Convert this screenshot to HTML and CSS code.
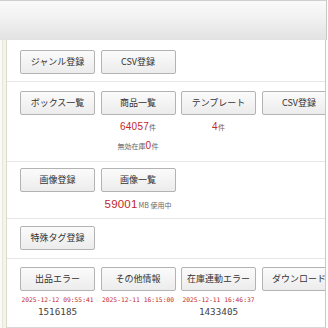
FILE: index.html
```html
<!DOCTYPE html>
<html lang="ja">
<head>
<meta charset="utf-8">
<link rel="stylesheet" href="styles.css">
</head>
<body>
<div class="page">
  <div class="topbar"></div>
  <div class="main">
    <div class="gutter"></div>
    <div class="frame">
      <section class="sec s1">
        <div class="col"><button class="btn">ジャンル登録</button></div>
        <div class="col"><button class="btn">CSV登録</button></div>
      </section>
      <section class="sec s2">
        <div class="col"><button class="btn">ボックス一覧</button></div>
        <div class="col">
          <button class="btn">商品一覧</button>
          <div class="stat first"><span class="num">64057</span>件</div>
          <div class="stat second">無効在庫<span class="num small">0</span>件</div>
        </div>
        <div class="col">
          <button class="btn">テンプレート</button>
          <div class="stat first"><span class="num">4</span>件</div>
        </div>
        <div class="col"><button class="btn">CSV登録</button></div>
      </section>
      <section class="sec s3">
        <div class="col"><button class="btn">画像登録</button></div>
        <div class="col">
          <button class="btn">画像一覧</button>
          <div class="stat first"><span class="num big">59001</span>MB 使用中</div>
        </div>
      </section>
      <section class="sec s4">
        <div class="col"><button class="btn">特殊タグ登録</button></div>
      </section>
      <section class="sec s5">
        <div class="col">
          <button class="btn">出品エラー</button>
          <div class="date">2025-12-12 09:55:41</div>
          <div class="count">1516185</div>
        </div>
        <div class="col">
          <button class="btn">その他情報</button>
          <div class="date">2025-12-11 16:15:00</div>
        </div>
        <div class="col">
          <button class="btn">在庫連動エラー</button>
          <div class="date">2025-12-11 16:46:37</div>
          <div class="count">1433405</div>
        </div>
        <div class="col"><button class="btn">ダウンロード</button></div>
      </section>
    </div>
  </div>
</div>
</body>
</html>
```

FILE: styles.css
```css
html, body {
  margin: 0;
  padding: 0;
  background: #ffffff;
  font-family: "Noto Sans CJK JP", "Noto Sans", sans-serif;
}

.page {
  width: 328px;
  height: 328px;
  overflow: hidden;
}

.topbar {
  box-sizing: border-box;
  width: 327px;
  height: 40px;
  border-top: 1px solid #cfcfcf;
  border-right: 1px solid #c8c8c8;
  background: linear-gradient(#fafafa, #f1f1f1 45%, #e2e2e2);
}

.main {
  display: flex;
  height: 288px;
}

.gutter {
  width: 6px;
  flex: none;
  background: #f4f4ec;
  border-right: 1px solid #dcdcca;
  box-shadow: inset 2px 0 0 #fbfbf6, inset 3px 0 0 #e6e6da;
}

.frame {
  width: 319px;
  flex: none;
  border-right: 1px solid #c8c8c8;
  border-bottom: 1px solid #d8d8d8;
  box-sizing: border-box;
  overflow: hidden;
}

.sec {
  display: flex;
  gap: 5.5px;
  padding-left: 13px;
  border-bottom: 1px solid #e6e6e6;
}

.s1 { padding-top: 10px; padding-bottom: 7px; }
.s2 { padding-top: 9px; padding-bottom: 9px; }
.s3 { padding-top: 6px; padding-bottom: 6px; }
.s4 { padding-top: 7px; padding-bottom: 8px; }
.s5 { padding-top: 8px; border-bottom: none; }

.col {
  width: 75px;
  flex: none;
  display: flex;
  flex-direction: column;
  align-items: center;
}

.btn {
  box-sizing: border-box;
  width: 75px;
  height: 24px;
  margin: 0;
  padding: 0;
  border: 1px solid #b3b3b3;
  border-radius: 2px;
  background: linear-gradient(#fbfbfb, #ececec);
  color: #333333;
  font-family: "Noto Sans CJK JP", "Noto Sans", sans-serif;
  font-size: 9px;
  line-height: 22px;
  white-space: nowrap;
  overflow: hidden;
}

.stat {
  font-size: 7px;
  color: #666666;
  white-space: nowrap;
  text-align: center;
}

.stat.first {
  margin-top: 5px;
  line-height: 14px;
}

.stat.second {
  margin-top: 6px;
  line-height: 12px;
}

.num {
  font-family: "Liberation Sans", Arial, sans-serif;
  font-size: 10px;
  color: #c0282d;
  letter-spacing: 0.2px;
}

.num.small {
  font-size: 10px;
}

.num.big {
  font-size: 11.5px;
  margin-right: 1px;
}

.date {
  margin-top: 4px;
  font-family: "DejaVu Sans Mono", monospace;
  font-size: 6.3px;
  line-height: 9px;
  color: #c0282d;
  white-space: nowrap;
}

.count {
  margin-top: 2px;
  font-family: "DejaVu Sans Mono", monospace;
  font-size: 9.3px;
  line-height: 11px;
  color: #444444;
  white-space: nowrap;
}
```
